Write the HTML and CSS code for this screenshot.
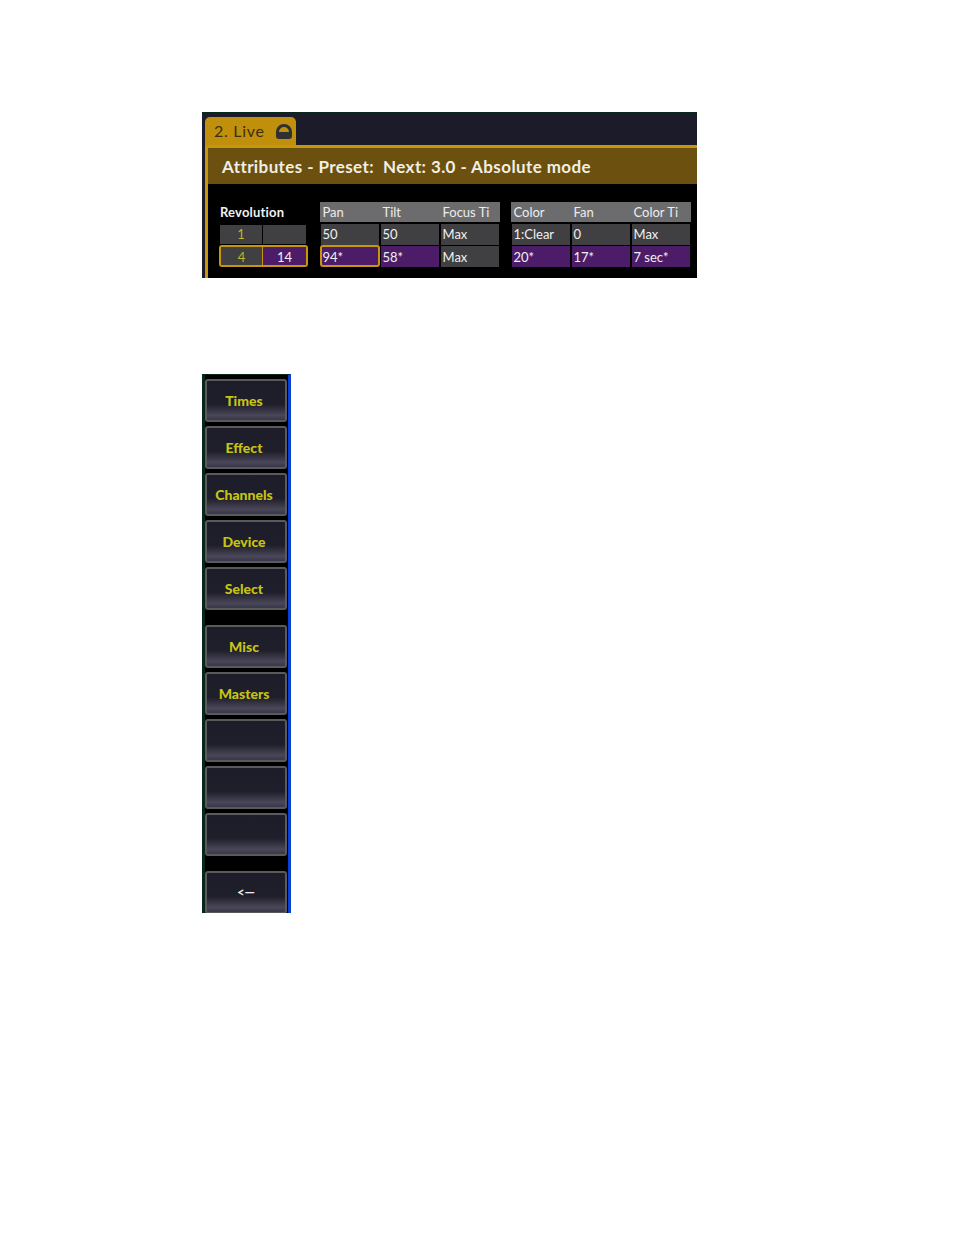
FILE: index.html
```html
<!DOCTYPE html>
<html lang="en">
<head>
<meta charset="utf-8">
<title>Attributes</title>
<link rel="stylesheet" href="styles.css">
</head>
<body>
<section class="panel">
  <div class="tabrow">
    <div class="tab">
      <span class="tab-label">2. Live</span>
      <svg class="lock" viewBox="0 0 16 15" aria-hidden="true"><path fill-rule="evenodd" d="M0 12V8a8 8 0 0 1 16 0v4a3 3 0 0 1-3 3H3a3 3 0 0 1-3-3zM3 8h10a5 5 0 0 0-10 0z"/></svg>
    </div>
  </div>
  <div class="frame">
    <h1 class="title">Attributes - Preset:&nbsp; Next: 3.0 - Absolute mode</h1>
    <div class="sheet">
      <div class="rev">
        <div class="rev-head">Revolution</div>
        <div class="rev-row">
          <div class="rev-cell num">1</div>
          <div class="rev-cell"></div>
        </div>
        <div class="rev-row selected">
          <div class="rev-cell num">4</div>
          <div class="rev-cell val">14</div>
        </div>
      </div>
      <div class="group">
        <div class="head">Pan</div><div class="head">Tilt</div><div class="head">Focus Ti</div>
        <div class="cell">50</div><div class="cell">50</div><div class="cell">Max</div>
        <div class="cell low changed focus">94*</div><div class="cell low changed">58*</div><div class="cell low">Max</div>
      </div>
      <div class="group">
        <div class="head">Color</div><div class="head">Fan</div><div class="head">Color Ti</div>
        <div class="cell">1:Clear</div><div class="cell">0</div><div class="cell">Max</div>
        <div class="cell low changed">20*</div><div class="cell low changed">17*</div><div class="cell low changed">7 sec*</div>
      </div>
    </div>
  </div>
</section>
<nav class="side">
  <div class="stack">
    <button class="key">Times</button>
    <button class="key">Effect</button>
    <button class="key">Channels</button>
    <button class="key">Device</button>
    <button class="key">Select</button>
  </div>
  <div class="stack">
    <button class="key">Misc</button>
    <button class="key">Masters</button>
    <button class="key"></button>
    <button class="key"></button>
    <button class="key"></button>
  </div>
  <div class="stack">
    <button class="key back">&lt;—</button>
  </div>
</nav>
</body>
</html>
```
FILE: styles.css
```css
html, body {
  margin: 0;
  padding: 0;
  background: #fff;
}
body {
  width: 954px;
  height: 1235px;
  overflow: hidden;
  font-family: "Lato", "Liberation Sans", sans-serif;
}
.panel {
  width: 495px;
  height: 166px;
  margin: 112px 0 0 202px;
  background: #1b1b29;
  border-top: 1px solid #07261c;
  box-sizing: border-box;
  display: flex;
  flex-direction: column;
  overflow: hidden;
}
.tabrow {
  height: 32px;
  flex: none;
  padding: 4px 0 0 3px;
  box-sizing: border-box;
}
.tab {
  width: 91px;
  height: 28px;
  background: #c08f0c;
  border-radius: 5px 5px 0 0;
  display: flex;
  align-items: center;
  justify-content: space-between;
  padding: 0 4px 0 9px;
  box-sizing: border-box;
}
.tab-label {
  font-size: 16px;
  letter-spacing: 0.7px;
  color: #3a3112;
  margin-bottom: 2px;
}
.lock {
  width: 16px;
  height: 15px;
  fill: #2e3033;
}
.frame {
  flex: 1;
  margin-left: 3px;
  border-top: 3px solid #c8960a;
  border-left: 3px solid #c8960a;
  background: #000;
  display: flex;
  flex-direction: column;
}
.title {
  margin: 0;
  height: 36px;
  flex: none;
  background: #6b500f;
  color: #f1eee4;
  font-size: 17px;
  font-weight: 700;
  letter-spacing: 0.4px;
  line-height: 38px;
  padding-left: 14px;
}
.sheet {
  display: flex;
  padding: 18px 0 0 11px;
}
.rev {
  width: 89px;
  margin-right: 12px;
  flex: none;
}
.rev-head {
  height: 22px;
  padding-left: 1px;
  color: #f0f0f0;
  font-size: 13px;
  font-weight: 700;
  letter-spacing: 0.2px;
  line-height: 20px;
}
.rev-row {
  display: flex;
  gap: 1px;
  height: 19px;
  margin: 1px 2px 0 1px;
}
.rev-row.selected {
  height: 22px;
  margin: 1px 0 0;
  border: 2px solid #c8960a;
  border-radius: 3px;
  box-sizing: border-box;
  gap: 0;
}
.rev-cell {
  flex: 1;
  background: #403f42;
  color: #f0f0f0;
  font-size: 13px;
  text-align: center;
  line-height: 19px;
}
.rev-cell.num {
  flex: none;
  width: 42px;
  box-sizing: border-box;
  color: #b9b62a;
}
.rev-row.selected .rev-cell {
  line-height: 20px;
}
.rev-row.selected .num {
  width: 42px;
  border-right: 1px solid #c8960a;
}
.rev-cell.val {
  background: #4c1c69;
}
.group {
  display: grid;
  grid-template-columns: 60px 60px 60px;
  grid-template-rows: 21px 22px 22px;
  width: 180px;
  margin-right: 11px;
  flex: none;
}
.head {
  background: #6c6c6f;
  color: #ececec;
  font-size: 13px;
  line-height: 20px;
  padding-left: 2.5px;
  margin-bottom: 1px;
}
.cell {
  background: #403f42;
  color: #f0f0f0;
  font-size: 13px;
  line-height: 20px;
  padding-left: 1.5px;
  border: solid #000;
  border-width: 1px 1px 0 1px;
  box-sizing: border-box;
  height: 22px;
}
.cell.low {
  line-height: 22px;
}
.cell.changed {
  background: #4c1c69;
}
.cell.focus {
  outline: 2px solid #c8960a;
  outline-offset: -2px;
  border-radius: 3px;
}
.side {
  width: 89px;
  height: 539px;
  margin: 96px 0 0 202px;
  background: #000;
  border-top: 1px solid #07261c;
  border-left: 3px solid #07261c;
  border-right: 3px solid #0a3fd8;
  box-sizing: border-box;
  padding-top: 4px;
  display: flex;
  flex-direction: column;
  gap: 15px;
  overflow: hidden;
}
.stack {
  display: flex;
  flex-direction: column;
  gap: 4px;
  width: 83px;
  flex: none;
}
.key {
  display: block;
  width: 82px;
  height: 43px;
  padding: 0 4px 0 0;
  flex: none;
  border: 2px solid #5a5a5c;
  border-radius: 3px;
  background: linear-gradient(#1d1c29 0, #1f1e2b 60%, #4a4758 88%, #38364a 100%);
  color: #c6c414;
  font-family: "Lato", "Liberation Sans", sans-serif;
  font-size: 14px;
  font-weight: 900;
  text-align: center;
}
.back {
  color: #f0f0f0;
  font-weight: 700;
  font-size: 13px;
  padding: 0 0 2px;
}
```
